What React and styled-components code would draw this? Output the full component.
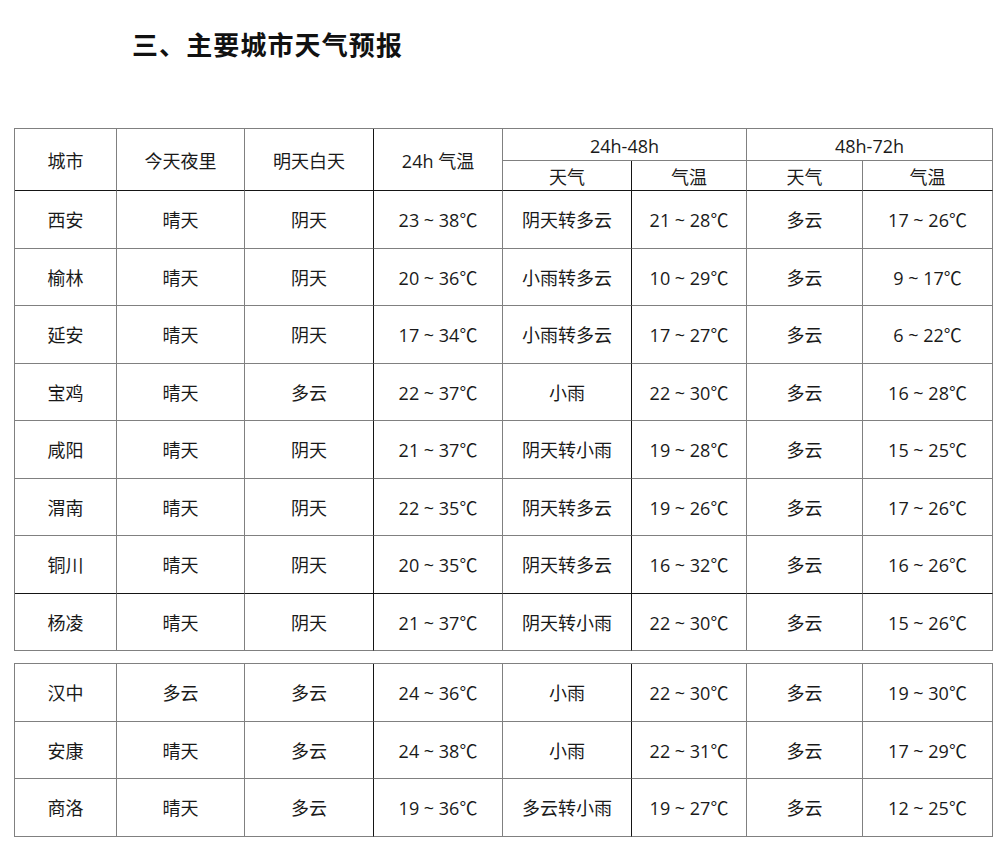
import React from "react";
import styled, {createGlobalStyle} from "styled-components";

const GlobalStyle = createGlobalStyle`
    body {
        margin: 0;
        background: #fff;
        font-family: "Open Sans", "Noto Sans CJK SC", sans-serif;
        color: #1a1a1a;
    }
`;

const Page = styled.div`
    width: 1003px;
    padding: 30px 0 0 14px;
    box-sizing: border-box;
`;

const Title = styled.h1`
    margin: 0 0 70px 118px;
    font-family: "Noto Sans CJK SC", sans-serif;
    font-size: 26px;
    line-height: 28px;
    font-weight: 700;
    color: #111;
    letter-spacing: 1.1px;
`;

const Table = styled.table`
    width: 978px;
    table-layout: fixed;
    border-collapse: separate;
    border-spacing: 0;
    border-top: 1px solid #808080;
    border-left: 1px solid #808080;
    margin-bottom: ${({$gap}) => $gap || 0}px;
`;

const Cell = styled.td`
    box-sizing: border-box;
    height: ${({$h}) => $h}px;
    padding: ${({$pt}) => $pt || 0}px 0 0;
    text-align: center;
    vertical-align: middle;
    font-size: 18px;
    font-weight: 400;
    white-space: nowrap;
    border-right: 1px solid ${({$darkRight}) => ($darkRight ? "#151515" : "#808080")};
    border-bottom: 1px solid ${({$darkBottom}) => ($darkBottom ? "#151515" : "#808080")};
`;

const widths = [102, 128, 129, 129, 129, 115, 116, 130];
const darkCols = [2, 4];

const rowsTop = [
    ["西安", "晴天", "阴天", "23 ~ 38℃", "阴天转多云", "21 ~ 28℃", "多云", "17 ~ 26℃"],
    ["榆林", "晴天", "阴天", "20 ~ 36℃", "小雨转多云", "10 ~ 29℃", "多云", "9 ~ 17℃"],
    ["延安", "晴天", "阴天", "17 ~ 34℃", "小雨转多云", "17 ~ 27℃", "多云", "6 ~ 22℃"],
    ["宝鸡", "晴天", "多云", "22 ~ 37℃", "小雨", "22 ~ 30℃", "多云", "16 ~ 28℃"],
    ["咸阳", "晴天", "阴天", "21 ~ 37℃", "阴天转小雨", "19 ~ 28℃", "多云", "15 ~ 25℃"],
    ["渭南", "晴天", "阴天", "22 ~ 35℃", "阴天转多云", "19 ~ 26℃", "多云", "17 ~ 26℃"],
    ["铜川", "晴天", "阴天", "20 ~ 35℃", "阴天转多云", "16 ~ 32℃", "多云", "16 ~ 26℃"],
    ["杨凌", "晴天", "阴天", "21 ~ 37℃", "阴天转小雨", "22 ~ 30℃", "多云", "15 ~ 26℃"],
];

const rowsBottom = [
    ["汉中", "多云", "多云", "24 ~ 36℃", "小雨", "22 ~ 30℃", "多云", "19 ~ 30℃"],
    ["安康", "晴天", "多云", "24 ~ 38℃", "小雨", "22 ~ 31℃", "多云", "17 ~ 29℃"],
    ["商洛", "晴天", "多云", "19 ~ 36℃", "多云转小雨", "19 ~ 27℃", "多云", "12 ~ 25℃"],
];

const Cols = () => (
    <colgroup>
        {widths.map((w, i) => <col key={i} style={{width: w}}/>)}
    </colgroup>
);

const DataRow = ({row, darkBottom}) => (
    <tr>
        {row.map((text, i) => (
            <Cell key={i} $h={57.5} $darkRight={darkCols.includes(i)} $darkBottom={darkBottom}>
                {text}
            </Cell>
        ))}
    </tr>
);

export default function App() {
    return (
        <Page>
            <GlobalStyle/>
            <Title>三、主要城市天气预报</Title>
            <Table $gap={12}>
                <Cols/>
                <thead>
                    <tr>
                        <Cell as="th" rowSpan={2} $h={32} $darkBottom>城市</Cell>
                        <Cell as="th" rowSpan={2} $h={32} $darkBottom>今天夜里</Cell>
                        <Cell as="th" rowSpan={2} $h={32} $darkBottom $darkRight>明天白天</Cell>
                        <Cell as="th" rowSpan={2} $h={32} $darkBottom>24h 气温</Cell>
                        <Cell as="th" colSpan={2} $h={32} $pt={3}>24h-48h</Cell>
                        <Cell as="th" colSpan={2} $h={32} $pt={3}>48h-72h</Cell>
                    </tr>
                    <tr>
                        <Cell as="th" $h={30} $darkBottom $darkRight>天气</Cell>
                        <Cell as="th" $h={30} $darkBottom>气温</Cell>
                        <Cell as="th" $h={30} $darkBottom>天气</Cell>
                        <Cell as="th" $h={30} $darkBottom>气温</Cell>
                    </tr>
                </thead>
                <tbody>
                    {rowsTop.map((row, i) => (
                        <DataRow key={row[0]} row={row} darkBottom={i === 6}/>
                    ))}
                </tbody>
            </Table>
            <Table>
                <Cols/>
                <tbody>
                    {rowsBottom.map((row) => <DataRow key={row[0]} row={row}/>)}
                </tbody>
            </Table>
        </Page>
    );
}
